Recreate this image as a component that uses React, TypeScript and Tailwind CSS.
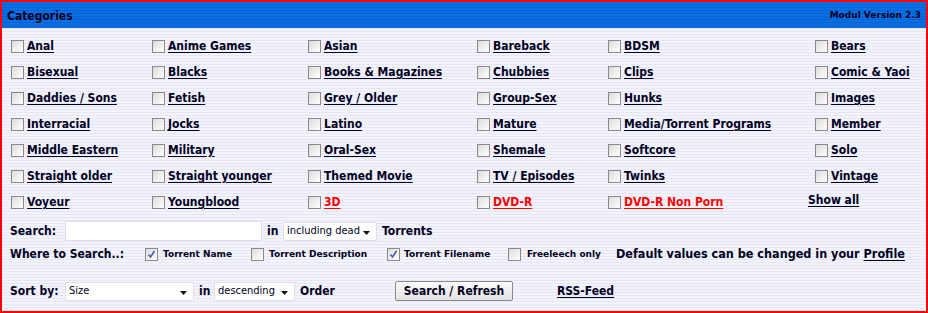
import React from "react";

type Cat = { label: string; red?: boolean } | null;

const rows: Cat[][] = [
  [{ label: "Anal" }, { label: "Anime Games" }, { label: "Asian" }, { label: "Bareback" }, { label: "BDSM" }, { label: "Bears" }],
  [{ label: "Bisexual" }, { label: "Blacks" }, { label: "Books & Magazines" }, { label: "Chubbies" }, { label: "Clips" }, { label: "Comic & Yaoi" }],
  [{ label: "Daddies / Sons" }, { label: "Fetish" }, { label: "Grey / Older" }, { label: "Group-Sex" }, { label: "Hunks" }, { label: "Images" }],
  [{ label: "Interracial" }, { label: "Jocks" }, { label: "Latino" }, { label: "Mature" }, { label: "Media/Torrent Programs" }, { label: "Member" }],
  [{ label: "Middle Eastern" }, { label: "Military" }, { label: "Oral-Sex" }, { label: "Shemale" }, { label: "Softcore" }, { label: "Solo" }],
  [{ label: "Straight older" }, { label: "Straight younger" }, { label: "Themed Movie" }, { label: "TV / Episodes" }, { label: "Twinks" }, { label: "Vintage" }],
  [{ label: "Voyeur" }, { label: "Youngblood" }, { label: "3D", red: true }, { label: "DVD-R", red: true }, { label: "DVD-R Non Porn", red: true }, null],
];

function Box({ checked = false }: { checked?: boolean }) {
  return (
    <span className="relative inline-block h-[13px] w-[13px] shrink-0 border border-[#8a8a8a] bg-gradient-to-br from-[#dcdcdc] to-[#ffffff]">
      {checked && (
        <svg viewBox="0 0 11 11" className="absolute left-0 top-0 h-[11px] w-[11px]">
          <path d="M2.5 5.5 L4.5 8 L8.5 2" fill="none" stroke="#4a5aa8" strokeWidth="1.6" />
        </svg>
      )}
    </span>
  );
}

function Select({ value, width }: { value: string; width: string }) {
  return (
    <span className={`flex h-[19px] items-center justify-between whitespace-nowrap border border-[#e0e0e8] bg-white pl-[3px] pr-[6px] font-['DejaVu_Sans_Condensed','DejaVu_Sans',sans-serif] text-[11px] font-normal ${width}`}>
      <span>{value}</span>
      <svg viewBox="0 0 7 4" className="mt-[3px] h-[4px] w-[7px] shrink-0">
        <path d="M0 0 H7 L3.5 4 Z" fill="#111" />
      </svg>
    </span>
  );
}

export default function App() {
  return (
    <div className="h-[313px] w-[928px] border-2 border-[#ff0000] bg-[repeating-linear-gradient(to_bottom,#f3f3fb_0px,#f3f3fb_2px,#e6e6f4_2px,#e6e6f4_3px)] font-['DejaVu_Sans_Condensed','DejaVu_Sans',Verdana,sans-serif] font-bold text-[#000022]">
      <div className="flex h-[26px] items-center justify-between bg-[repeating-linear-gradient(to_bottom,#0a6fe2_0px,#0a6fe2_2px,#0564d4_2px,#0564d4_3px)] px-[5px] pt-[1px]">
        <span className="text-[12px]">Categories</span>
        <span className="font-['DejaVu_Sans',sans-serif] text-[9px]">Modul Version 2.3</span>
      </div>

      <div className="grid grid-cols-[141px_156px_169px_131px_207px_1fr] pl-[9px] pt-[5px] text-[12px]">
        {rows.map((row, ri) =>
          row.map((c, ci) =>
            c ? (
              <div key={`${ri}-${ci}`} className="flex h-[26px] items-center gap-[3px]">
                <Box />
                <span className={`underline underline-offset-2 ${c.red ? "text-[#ff0000]" : ""}`}>{c.label}</span>
              </div>
            ) : (
              <div key={`${ri}-${ci}`} className="-ml-[7px] flex h-[26px] items-start pt-[2px]">
                <span className="underline underline-offset-2">Show all</span>
              </div>
            ),
          ),
        )}
      </div>

      <div className="pl-[8px] pt-[6px] text-[12px]">
        <div className="flex h-[20px] items-center">
          <span className="w-[55px]">Search:</span>
          <span className="h-[20px] w-[197px] border border-[#e0e0e8] bg-white" />
          <span className="ml-[5px] w-[16px]">in</span>
          <Select value="including dead" width="w-[94px]" />
          <span className="ml-[5px]">Torrents</span>
        </div>
        <div className="mt-[3px] flex h-[20px] items-center">
          <span className="w-[135px]">Where to Search..:</span>
          <Box checked />
          <span className="ml-[5px] mt-[2px] w-[88px] font-['DejaVu_Sans',sans-serif] text-[9px]">Torrent Name</span>
          <Box />
          <span className="ml-[5px] mt-[2px] w-[118px] font-['DejaVu_Sans',sans-serif] text-[9px]">Torrent Description</span>
          <Box checked />
          <span className="ml-[4px] mt-[2px] w-[104px] font-['DejaVu_Sans',sans-serif] text-[9px]">Torrent Filename</span>
          <Box />
          <span className="ml-[6px] mt-[2px] w-[89px] font-['DejaVu_Sans',sans-serif] text-[9px] font-semibold">Freeleech only</span>
          <span className="text-[12.5px]">
            Default values can be changed in your{" "}
            <span className="underline underline-offset-2">Profile</span>
          </span>
        </div>
        <div className="mt-[17px] flex h-[20px] items-center">
          <span className="w-[55px]">Sort by:</span>
          <Select value="Size" width="w-[129px]" />
          <span className="ml-[5px] w-[15px]">in</span>
          <Select value="descending" width="w-[81px]" />
          <span className="ml-[5px] w-[95px]">Order</span>
          <button className="h-[20px] w-[118px] rounded-[2px] border border-[#8a8a8a] bg-gradient-to-b from-[#fbfbfb] to-[#e2e2e2] text-[12px] font-bold">
            Search / Refresh
          </button>
          <span className="ml-[44px] underline underline-offset-2">RSS-Feed</span>
        </div>
      </div>
    </div>
  );
}
